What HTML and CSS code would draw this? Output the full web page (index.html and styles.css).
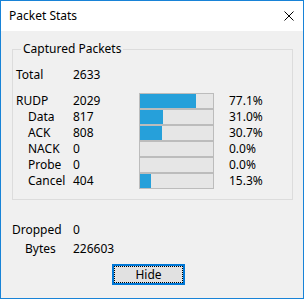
FILE: index.html
```html
<!DOCTYPE html>
<html>
  <head>
    <meta charset="UTF-8" />
    <title>Packet Stats</title>
    <link rel="stylesheet" href="styles.css">
  </head>
  <body>
    <div class="window">
      <div class="titlebar">
        <span class="title">Packet Stats</span>
        <svg class="close" width="10" height="10" viewBox="0 0 10 10">
          <path d="M0.5 0.5 L9.5 9.5 M9.5 0.5 L0.5 9.5" stroke="#000" stroke-width="1" fill="none" />
        </svg>
      </div>
      <div class="content">
        <fieldset class="group">
          <legend>Captured Packets</legend>
          <div class="total">
            <span class="label">Total</span>
            <span class="value">2633</span>
          </div>
          <div class="stats">
            <span class="label">RUDP</span>
            <span class="value">2029</span>
            <div class="bar"><div class="fill" style="width: 77.1%"></div></div>
            <span class="pct">77.1%</span>

            <span class="label sub">Data</span>
            <span class="value">817</span>
            <div class="bar"><div class="fill" style="width: 31.0%"></div></div>
            <span class="pct">31.0%</span>

            <span class="label sub">ACK</span>
            <span class="value">808</span>
            <div class="bar"><div class="fill" style="width: 30.7%"></div></div>
            <span class="pct">30.7%</span>

            <span class="label sub">NACK</span>
            <span class="value">0</span>
            <div class="bar"><div class="fill" style="width: 0%"></div></div>
            <span class="pct">0.0%</span>

            <span class="label sub">Probe</span>
            <span class="value">0</span>
            <div class="bar"><div class="fill" style="width: 0%"></div></div>
            <span class="pct">0.0%</span>

            <span class="label sub">Cancel</span>
            <span class="value">404</span>
            <div class="bar"><div class="fill" style="width: 15.3%"></div></div>
            <span class="pct">15.3%</span>
          </div>
        </fieldset>
        <div class="dropped">
          <span class="label">Dropped</span>
          <span class="value">0</span>
          <span class="label sub">Bytes</span>
          <span class="value">226603</span>
        </div>
        <div class="actions">
          <button class="btn"><span class="focus">Hide</span></button>
        </div>
      </div>
    </div>
  </body>
</html>
```

FILE: styles.css
```css
* {
  box-sizing: border-box;
  margin: 0;
  padding: 0;
}

body {
  font-family: "Noto Sans", "Open Sans", sans-serif;
  font-size: 12px;
  color: #000;
  background-color: #f0f0f0;
}

.window {
  width: 304px;
  height: 299px;
  border: 1px solid #1883d7;
  display: flex;
  flex-direction: column;
}

.titlebar {
  height: 30px;
  background-color: #fff;
  display: flex;
  align-items: center;
  justify-content: space-between;
  padding: 0 9px 0 8px;
}

.title {
  line-height: 30px;
}

.close {
  display: block;
}

.content {
  flex: 1;
  background-color: #f0f0f0;
}

.group {
  margin: 11px 10px 0 11px;
  border: 1px solid #dcdcdc;
  padding: 0 0 10px 3px;
}

.group legend {
  margin-left: 5px;
  padding: 0 2px;
  line-height: 14px;
}

.total {
  display: grid;
  grid-template-columns: 57px auto;
  line-height: 16px;
  margin-top: 11px;
}

.stats {
  display: grid;
  grid-template-columns: 57px 66px 75px auto;
  grid-auto-rows: 16px;
  line-height: 16px;
  margin-top: 10px;
}

.label.sub {
  padding-left: 12px;
}

.bar {
  height: 16px;
  border: 1px solid #bcbcbc;
  background-color: #e6e6e6;
}

.fill {
  height: 100%;
  background-color: #26a0da;
}

.pct {
  padding-left: 15px;
}

.dropped {
  display: grid;
  grid-template-columns: 61px auto;
  row-gap: 3px;
  line-height: 16px;
  margin-top: 22px;
  padding-left: 11px;
}

.dropped .label.sub {
  padding-left: 13px;
}

.actions {
  padding: 7px 0 0 111px;
}

.btn {
  width: 73px;
  height: 21px;
  border: 2px solid #0078d7;
  background-color: #e1e1e1;
  font-family: inherit;
  font-size: 12px;
  color: #000;
  padding: 0;
  display: flex;
}

.focus {
  flex: 1;
  border: 1px dotted #000;
  line-height: 15px;
  text-align: center;
}
```
